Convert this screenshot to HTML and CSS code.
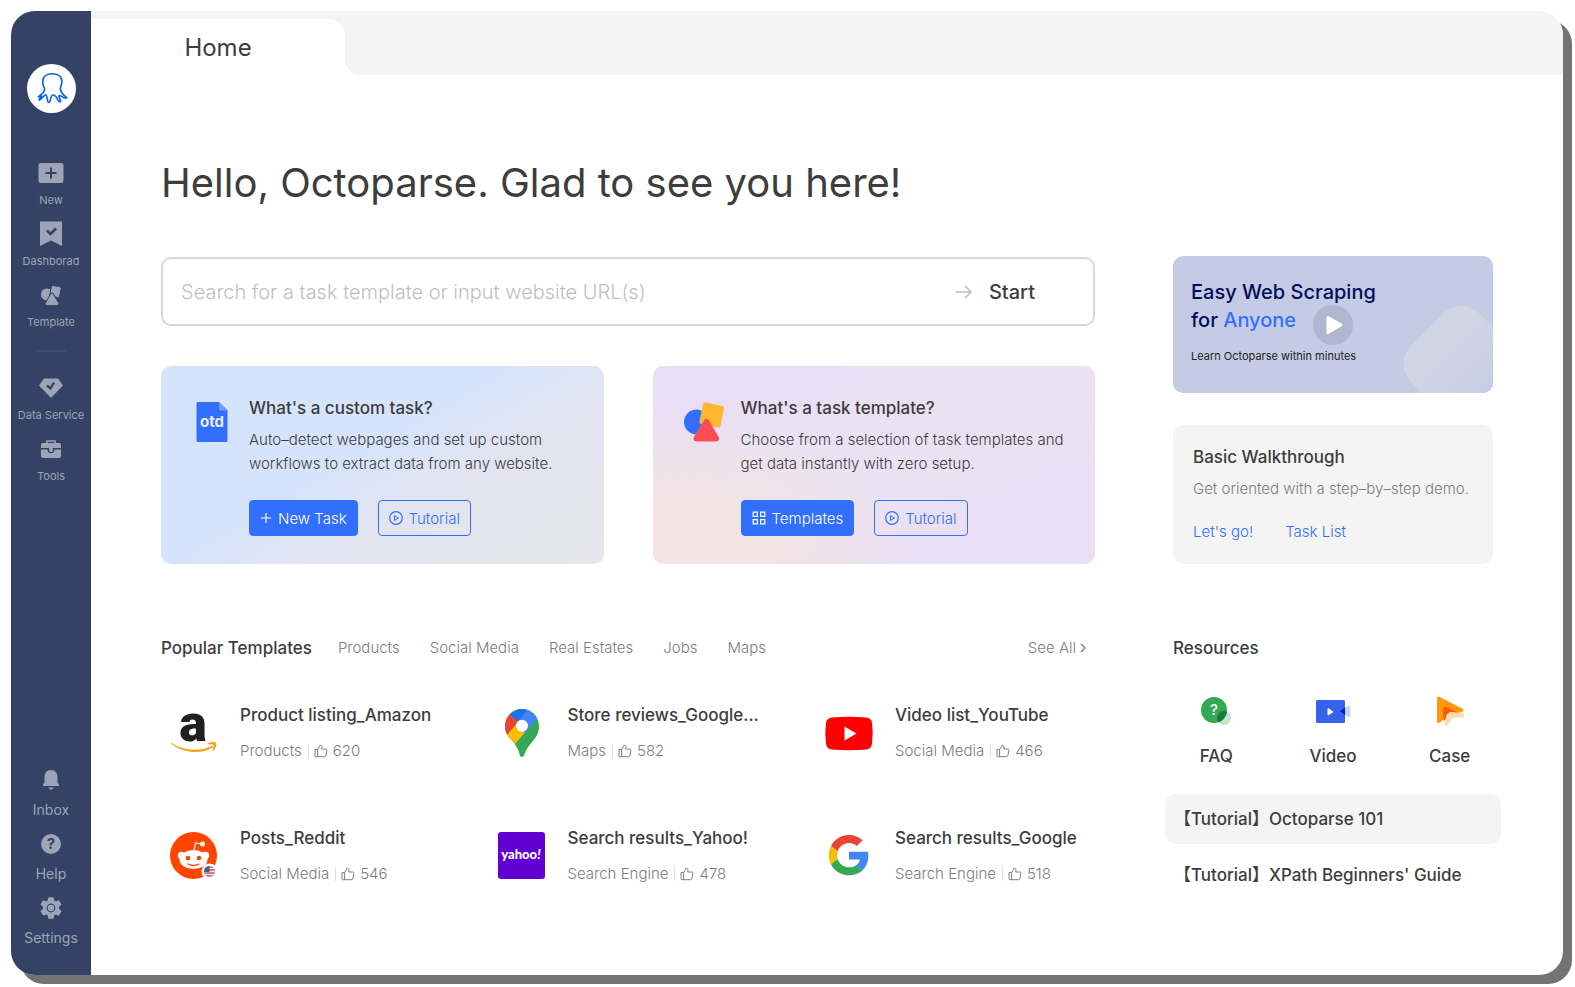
FILE: index.html
```html
<!DOCTYPE html>
<html lang="en">
<head>
<meta charset="utf-8">
<title>Octoparse</title>
<meta name="viewport" content="width=device-width, initial-scale=1">
<link rel="stylesheet" href="styles.css">
</head>
<body>
<svg class="defs" aria-hidden="true">
  <symbol id="thumb" viewBox="0 0 14 14">
    <path d="M1 5.600h2.600L5.400 2.600 5.800 1.400c1.300-.4 2.300.4 2.200 1.600L7.700 5h4.100c.8 0 1.300.6 1.100 1.400l-1 5c-.2.800-.7 1.300-1.500 1.300H1.800c-.5 0-.8-.3-.8-.8zM3.600 5.600v7" fill="none" stroke="currentColor" stroke-linejoin="round"/>
  </symbol>
  <symbol id="play-ring" viewBox="0 0 14 14">
    <circle cx="7" cy="7" r="6.300" fill="none" stroke="currentColor" stroke-width="1.200"/>
    <path d="M5.500 4.600v4.800L9.400 7z" fill="none" stroke="currentColor" stroke-linejoin="round"/>
  </symbol>
</svg>
<div class="window">
  <aside class="sidebar">
    <svg class="logo" viewBox="78 190 150 150" role="img" aria-label="Octoparse">
      <circle cx="153" cy="265" r="75" fill="#fff"/>
      <path d="M132 266C128 258 126 253 126 244C126 229 138 220 155 220C173 220 185 229 185 244C185 253 180 258 180 267C182 279 191 287 200 293C196 297 189 293 184 289C180 286 175 285 176 290L181 303C179 309 175 304 172 299C168 291 163 285 158 285C152 285 151 292 149 302C147 310 143 310 141 302C139 294 139 285 135 284C131 284 123 299 115 301C114 297 121 293 123 289C120 290 116 291 113 290C121 285 132 278 132 266Z" fill="none" stroke="#0a62e8" stroke-width="5" stroke-linejoin="round"/>
    </svg>
    <nav class="nav nav-main">
      <a href="#" class="nav-item"><svg width="26" height="26" viewBox="0 0 26 26"><path fill="currentColor" fill-rule="evenodd" d="M3 3h20q2.500 0 2.500 2.500v15q0 2.500-2.500 2.500H3Q.5 23 .5 20.500v-15Q.5 3 3 3zM12 7.500V12H7.500v2H12v4.500h2V14h4.500v-2H14V7.500z"/></svg><span>New</span></a>
      <a href="#" class="nav-item"><svg width="26" height="26" viewBox="0 0 26 26"><path fill="currentColor" d="M2 .5h22V25l-11-5.500L2 25z"/><path d="M9 9.500l3.500 3.500L18 7.500" fill="none" stroke="#344365" stroke-width="2.600"/></svg><span>Dashborad</span></a>
      <a href="#" class="nav-item"><svg width="26" height="26" viewBox="0 0 26 26"><circle cx="9" cy="12.500" r="6" fill="currentColor"/><rect x="12.500" y="4" width="10" height="11" rx="1.500" transform="rotate(12 17.500 9.500)" fill="currentColor" stroke="#344365"/><path d="M14 12.500l6 10H8.500z" fill="currentColor" stroke="#344365" stroke-width="4" stroke-linejoin="round"/><path d="M14 12.500l5.500 9.500h-11z" fill="currentColor" stroke="currentColor" stroke-width="2" stroke-linejoin="round"/></svg><span>Template</span></a>
      <hr class="nav-rule">
      <a href="#" class="nav-item"><svg width="26" height="26" viewBox="0 0 26 26"><path fill="currentColor" stroke="currentColor" stroke-linejoin="round" d="M6 4h14l4.500 6.500L13 22.500 1.500 10.500z"/><path d="M9 10.500l3.500 3L16 7.500" fill="none" stroke="#344365" stroke-width="2.400"/></svg><span>Data Service</span></a>
      <a href="#" class="nav-item"><svg width="26" height="26" viewBox="0 0 26 26"><path d="M9 7.500V5h8v2.500" fill="none" stroke="currentColor" stroke-width="1.600"/><path fill="currentColor" d="M5 7h16q2 0 2 2v3H3V9q0-2 2-2zM3 13.500h6.500c0 5 7 5 7 0H23V20q0 2-2 2H5q-2 0-2-2z"/><path d="M11.200 12v2.500c0 2 3.600 2 3.600 0V12" fill="currentColor"/></svg><span>Tools</span></a>
    </nav>
    <nav class="nav nav-foot">
      <a href="#" class="nav-item"><svg width="26" height="26" viewBox="0 0 26 26"><path fill="currentColor" d="M13 3c4.500 0 6.500 3.500 6.500 7v5.500l1.500 2V19H5v-1.500l1.500-2V10c0-3.500 2-7 6.500-7zM10.500 20.500h5q-.5 2-2.500 2t-2.500-2z"/></svg><span>Inbox</span></a>
      <a href="#" class="nav-item"><svg width="26" height="26" viewBox="0 0 26 26"><circle cx="13" cy="13" r="10" fill="currentColor"/><text x="13" y="18" class="mark mark-dark">?</text></svg><span>Help</span></a>
      <a href="#" class="nav-item"><svg width="26" height="26" viewBox="0 0 26 26"><path fill="currentColor" stroke="currentColor" stroke-width="1.500" stroke-linejoin="round" d="M11 3h4l.6 3 2 1.100 3-1 2 3.400-2.300 2v2.800l2.300 2-2 3.400-3-1-2 1.100L15 23h-4l-.6-3.200-2-1.100-3 1-2-3.400 2.300-2v-2.800l-2.300-2 2-3.400 3 1 2-1.100z"/><circle cx="13" cy="13" r="3.800" fill="none" stroke="#344365" stroke-width="1.200"/></svg><span>Settings</span></a>
    </nav>
  </aside>

  <div class="main">
    <header class="tabbar"><a href="#" class="tab">Home</a></header>
    <main class="content">
      <h1>Hello, Octoparse. Glad to see you here!</h1>

      <div class="columns top">
        <div class="left">
          <form class="search">
            <input type="text" aria-label="Search" placeholder="Search for a task template or input website URL(s)">
            <button type="button" class="start"><svg width="18" height="14" viewBox="0 0 18 14"><path d="M1 7h15M10.500 1.500L16 7l-5.500 5.500" fill="none" stroke="#bfbfbf" stroke-width="1.500" stroke-linecap="round"/></svg>Start</button>
          </form>
          <div class="cards">
            <section class="card card-task">
              <svg class="card-icon" viewBox="0 0 40 40"><path fill="#326fff" d="M5.500 0H27l8.500 8.500v30q0 1.500-1.500 1.500H6q-1.500 0-1.500-1.500v-37Q4.500 0 5.500 0z"/><path fill="#6f9bff" d="M27 0l8.500 8.500H28q-1 0-1-1z"/><text x="20" y="25" class="otd">otd</text></svg>
              <div>
                <h2>What's a custom task?</h2>
                <p>Auto–detect webpages and set up custom workflows to extract data from any website.</p>
                <div class="actions">
                  <button type="button" class="btn btn-fill"><svg width="12" height="12" viewBox="0 0 12 12"><path d="M6 1v10M1 6h10" stroke="currentColor" stroke-width="1.200"/></svg>New Task</button>
                  <button type="button" class="btn btn-line"><svg width="14" height="14"><use href="#play-ring"/></svg>Tutorial</button>
                </div>
              </div>
            </section>
            <section class="card card-template">
              <svg class="card-icon" viewBox="0 0 40 40"><circle cx="12.500" cy="20" r="12.500" fill="#326fff"/><rect x="17" y="2" width="21.500" height="22" rx="2.500" transform="rotate(12 27.500 13)" fill="#ffb72e"/><path d="M22.500 20L32 36.500H12.500z" fill="#ff4d53" stroke="#ff4d53" stroke-width="6" stroke-linejoin="round"/></svg>
              <div>
                <h2>What's a task template?</h2>
                <p>Choose from a selection of task templates and get data instantly with zero setup.</p>
                <div class="actions">
                  <button type="button" class="btn btn-fill"><svg width="14" height="14" viewBox="0 0 14 14"><path d="M1.200 1.200h4.200v4.200H1.200zM8.600 1.200h4.200v4.200H8.600zM1.200 8.600h4.200v4.200H1.200zM8.600 8.600h4.200v4.200H8.600z" fill="none" stroke="currentColor" stroke-width="1.200"/></svg>Templates</button>
                  <button type="button" class="btn btn-line"><svg width="14" height="14"><use href="#play-ring"/></svg>Tutorial</button>
                </div>
              </div>
            </section>
          </div>
        </div>

        <div class="right">
          <section class="banner">
            <h2>Easy Web Scraping<br>for <span>Anyone</span></h2>
            <p>Learn Octoparse within minutes</p>
            <button type="button" class="play" aria-label="Play"><svg width="40" height="40" viewBox="0 0 40 40"><path d="M15 12.500v15l13-7.500z" fill="#fff" stroke="#fff" stroke-width="3" stroke-linejoin="round"/></svg></button>
          </section>
          <section class="walk">
            <h2>Basic Walkthrough</h2>
            <p>Get oriented with a step–by–step demo.</p>
            <div class="links"><a href="#">Let's go!</a><a href="#">Task List</a></div>
          </section>
        </div>
      </div>

      <div class="columns bottom">
        <section>
          <div class="pop-head">
            <h2>Popular Templates</h2>
            <nav class="filters"><a href="#">Products</a><a href="#">Social Media</a><a href="#">Real Estates</a><a href="#">Jobs</a><a href="#">Maps</a></nav>
            <a href="#" class="see-all">See All<svg width="8" height="12" viewBox="0 0 8 12"><path d="M2 2l4 4-4 4" fill="none" stroke="currentColor" stroke-width="1.400"/></svg></a>
          </div>
          <div class="templates">
            <article class="tpl">
              <svg class="tpl-icon" viewBox="0 0 48 48"><text x="23" y="32" class="amz">a</text><path fill="#f9a11b" d="M1 33.500C13 42 31 43 42 36.500C43 36.500 43.500 37.500 42.500 38.500C30 46 13 44 1 34.500z"/><path fill="#f9a11b" d="M37.500 34.500C40 32.800 44 32.500 46 33.500C47 36 45.500 40 43 42C42 42 43 39.500 43.800 36C43 35 40 35 37.500 35.300z"/></svg>
              <div><h3>Product listing_Amazon</h3><p class="meta"><span>Products</span><span class="likes"><svg width="14" height="14"><use href="#thumb"/></svg>620</span></p></div>
            </article>
            <article class="tpl">
              <svg class="tpl-icon" viewBox="-21 0 144 144"><clipPath id="pin"><path d="M51 0C79 0 102 23 102 52C102 75 92 86 78 103C66 118 60 130 57 140Q51 148 45 140C42 128 38 118 30 106C18 90 0 78 0 52C0 23 23 0 51 0z"/></clipPath><g clip-path="url(#pin)"><path fill="#34a853" d="M0 0h102v144H0z"/><path fill="#fbbc04" d="M0 85l38-45 28 23-36 43H0z"/><path fill="#4285f4" d="M68 0h34v24L60 72 37 38z"/><path fill="#1a73e8" d="M14 17L0 0h68L38 39z"/><path fill="#ea4335" d="M-5 0L14 17l25 21L7 76l-12 10z"/></g><circle cx="51" cy="50" r="18" fill="#fff"/></svg>
              <div><h3>Store reviews_Google...</h3><p class="meta"><span>Maps</span><span class="likes"><svg width="14" height="14"><use href="#thumb"/></svg>582</span></p></div>
            </article>
            <article class="tpl">
              <svg class="tpl-icon" viewBox="0 0 48 48"><path fill="#f00" d="M7 8.500Q24 7 41 8.500Q46.500 9 47 14Q48.500 24 47 34.500Q46.500 40 41 40.500Q24 42 7 40.500Q1.500 40 1 34.500Q-.5 24 1 14Q1.500 9 7 8.500z"/><path fill="#fff" d="M19.500 17.500v14l12-7z"/></svg>
              <div><h3>Video list_YouTube</h3><p class="meta"><span>Social Media</span><span class="likes"><svg width="14" height="14"><use href="#thumb"/></svg>466</span></p></div>
            </article>
            <article class="tpl">
              <svg class="tpl-icon" viewBox="0 0 48 48"><circle cx="23.500" cy="23.500" r="23.500" fill="#ff4500"/><circle cx="11.500" cy="23.500" r="3.700" fill="#fff"/><circle cx="35.500" cy="23.500" r="3.700" fill="#fff"/><ellipse cx="23.500" cy="27.500" rx="14" ry="9.500" fill="#fff"/><path d="M24 18.500l1.500-7.500 6 1" fill="none" stroke="#fff" stroke-width="1.200"/><circle cx="32.500" cy="12" r="2.500" fill="#fff"/><circle cx="18" cy="26" r="2.300" fill="#ff4500"/><circle cx="29" cy="26" r="2.300" fill="#ff4500"/><path d="M18 32q5.500 3 11 0" fill="none" stroke="#ff4500" stroke-width="1.300" stroke-linecap="round"/><circle cx="39.500" cy="39.500" r="8" fill="#fff"/><clipPath id="flag"><circle cx="39.500" cy="39.500" r="5.500"/></clipPath><g clip-path="url(#flag)"><path fill="#f3e6e8" d="M34 34h11v11H34z"/><path d="M34 35h11M34 38h11M34 41h11M34 44h11" stroke="#d0576a" stroke-width="1.400"/><path fill="#4a5b86" d="M34 34h5.500v6H34z"/></g></svg>
              <div><h3>Posts_Reddit</h3><p class="meta"><span>Social Media</span><span class="likes"><svg width="14" height="14"><use href="#thumb"/></svg>546</span></p></div>
            </article>
            <article class="tpl">
              <svg class="tpl-icon" viewBox="0 0 48 48"><rect width="47" height="47" rx="3" fill="#6001d2"/><text x="23" y="27" class="yahoo">yahoo<tspan class="bang">!</tspan></text></svg>
              <div><h3>Search results_Yahoo!</h3><p class="meta"><span>Search Engine</span><span class="likes"><svg width="14" height="14"><use href="#thumb"/></svg>478</span></p></div>
            </article>
            <article class="tpl">
              <svg class="tpl-icon" viewBox="-4.500 -3.500 57 57"><path fill="#ea4335" d="M24 9.500c3.540 0 6.710 1.220 9.210 3.600l6.850-6.850C35.900 2.380 30.470 0 24 0 14.620 0 6.510 5.380 2.560 13.220l7.980 6.190C12.430 13.720 17.740 9.500 24 9.500z"/><path fill="#4285f4" d="M46.980 24.550c0-1.570-.15-3.090-.38-4.550H24v9.020h12.940c-.58 2.960-2.260 5.480-4.780 7.180l7.730 6c4.510-4.180 7.090-10.360 7.090-17.650z"/><path fill="#fbbc05" d="M10.530 28.590c-.48-1.450-.76-2.990-.76-4.590s.27-3.140.76-4.590l-7.980-6.190C.92 16.460 0 20.120 0 24c0 3.880.92 7.540 2.560 10.780l7.970-6.190z"/><path fill="#34a853" d="M24 48c6.480 0 11.930-2.130 15.890-5.810l-7.730-6c-2.150 1.450-4.920 2.300-8.160 2.300-6.260 0-11.570-4.220-13.470-9.910l-7.980 6.190C6.510 42.620 14.620 48 24 48z"/></svg>
              <div><h3>Search results_Google</h3><p class="meta"><span>Search Engine</span><span class="likes"><svg width="14" height="14"><use href="#thumb"/></svg>518</span></p></div>
            </article>
          </div>
        </section>

        <section>
          <h2 class="res-title">Resources</h2>
          <div class="res-icons">
            <a href="#"><svg width="36" height="36" viewBox="0 0 36 36"><circle cx="26" cy="22" r="7" fill="#bfe8ca"/><circle cx="16" cy="14" r="13" fill="#34a853"/><clipPath id="faq"><circle cx="16" cy="14" r="13"/></clipPath><circle cx="26" cy="22" r="7" fill="#187a3d" clip-path="url(#faq)"/><text x="16" y="19" class="mark mark-light">?</text></svg>FAQ</a>
            <a href="#"><svg width="36" height="36" viewBox="0 0 36 36"><rect x="1" y="4" width="29" height="23" rx="1.500" fill="#3662ec"/><path fill="#fff" stroke="#fff" stroke-linejoin="round" d="M13 12.500v6.500l5-3.200z"/><path fill="#c3d3f8" d="M30 11.500l4-2q1.500 0 1.500 1.500v8.500q0 1.500-1.500 1.500l-4-2z"/><path fill="#0b14e0" d="M30 11.500v7.500l-5-3.700z"/></svg>Video</a>
            <a href="#"><svg width="36" height="36" viewBox="0 0 36 36"><path fill="#ff980c" stroke="#ff980c" stroke-width="3" stroke-linejoin="round" d="M6.500 2L30 14l-8 3-8.500 3L6.500 25.500z"/><path fill="#ff5410" d="M11.500 12.500q0-3 3-1.500L26.500 17l-9 4-6 4z"/><path fill="#ffddab" stroke="#ffddab" stroke-width="3" stroke-linejoin="round" d="M14 28.500l1.500-8.500 3-2.500L30.500 18.500v1.500h-8.500l-2.500 1z"/></svg>Case</a>
          </div>
          <ul class="tutorials">
            <li><a href="#" class="active">【Tutorial】Octoparse 101</a></li>
            <li><a href="#">【Tutorial】XPath Beginners' Guide</a></li>
          </ul>
        </section>
      </div>
    </main>
  </div>
</div>
</body>
</html>
```
FILE: styles.css
```css
* { box-sizing: border-box; }
body {
  margin: 0;
  background: #fff;
  color: #3d3d3d;
  font-family: Inter, "Noto Sans CJK SC", sans-serif;
  font-size: 15px;
  font-weight: 300;
}
a { color: inherit; text-decoration: none; }
button, input { font: inherit; }
button { cursor: pointer; }
h1, h2, h3, p, ul { margin: 0; padding: 0; font-weight: inherit; }
h2, h3 { font-size: 17px; line-height: 24px; font-weight: 500; }
ul { list-style: none; }
svg { display: block; flex: none; overflow: visible; }
.defs { position: absolute; width: 0; height: 0; }

.window {
  display: flex;
  min-height: calc(100vh - 23px);
  margin: 11px 12px 12px 11px;
  border-radius: 24px;
  background: #fff;
  box-shadow: 9px 9px 0 #737373;
  overflow: hidden;
}

/* Sidebar */
.sidebar {
  flex: none;
  display: flex;
  flex-direction: column;
  align-items: center;
  width: 80px;
  padding: 53px 0 28px;
  background: #344365;
  color: #9ca4b6;
  font-weight: 400;
}
.logo { width: 49px; height: 49px; }
.nav { display: flex; flex-direction: column; align-items: center; }
.nav-main { margin-top: 47px; gap: 12px; font-size: 11px; }
.nav-foot { margin-top: auto; gap: 12px; font-size: 14px; }
.nav-item { display: flex; flex-direction: column; align-items: center; gap: 5px; line-height: 18px; white-space: nowrap; }
.nav-foot .nav-item { gap: 8px; }
.nav-rule { width: 30px; height: 2px; margin: 7px 0 11px; border: 0; background: #3f4b6a; }
.mark { font-family: Inter, sans-serif; font-size: 15px; font-weight: 700; text-anchor: middle; }
.mark-dark { fill: #344365; }
.mark-light { fill: #fff; font-weight: 500; }

/* Tab bar */
.main { flex: 1; min-width: 0; }
.tabbar { display: flex; height: 64px; padding-top: 8px; background: #f4f4f4; }
.tab {
  position: relative;
  display: flex;
  align-items: center;
  justify-content: center;
  width: 254px;
  background: #fff;
  border-radius: 0 16px 0 0;
  font-size: 24px;
  font-weight: 400;
}
.tab::after {
  content: "";
  position: absolute;
  left: 100%;
  bottom: 0;
  width: 16px;
  height: 16px;
  background: radial-gradient(circle at 100% 0, #f4f4f4 16px, #fff 16px);
}

/* Content */
.content { padding: 80px 70px 0; }
h1 { font-size: 40px; line-height: 56px; font-weight: 400; }
.columns { display: grid; grid-template-columns: minmax(0, 1fr) 320px; column-gap: 78px; }
.top { margin-top: 45px; }
.bottom { margin-top: 72px; }

.search {
  display: flex;
  align-items: center;
  height: 69px;
  margin-top: 1px;
  border: 2px solid #d9d9d9;
  border-radius: 10px;
}
.search input {
  flex: 1;
  min-width: 0;
  height: 100%;
  padding: 0 18px;
  border: 0;
  outline: 0;
  background: none;
  font-size: 20px;
  font-weight: 300;
  color: #3d3d3d;
}
.search input::placeholder { color: #bfbfbf; }
.start {
  display: flex;
  align-items: center;
  gap: 16px;
  padding: 0 58px 0 0;
  border: 0;
  background: none;
  color: #3d3d3d;
  font-size: 20px;
  font-weight: 500;
}

.cards { display: grid; grid-template-columns: 1fr 1fr; gap: 49px; margin-top: 40px; }
.card { display: flex; gap: 17px; padding: 30px 20px 28px 31px; border-radius: 10px; }
.card-task { background: linear-gradient(150deg, #d6e4fb 45%, #e4e4f0 65%, #e6e6ec 100%); }
.card-template {
  background:
    radial-gradient(ellipse 60% 80% at 0 100%, #f2e4e0 30%, #f2e4e000 100%),
    linear-gradient(155deg, #eadef6 20%, #eae2f3 38%, #eae2f3 60%, #eadef6 78%);
}
.card-icon { width: 40px; height: 40px; margin-top: 6px; }
.card p { margin-top: 8px; line-height: 24px; }
.otd { font-family: Inter, sans-serif; font-size: 15px; font-weight: 700; fill: #e6eeff; text-anchor: middle; }
.actions { display: flex; gap: 20px; margin-top: 24px; }
.btn {
  display: flex;
  align-items: center;
  gap: 6px;
  height: 36px;
  padding: 0 10px;
  border: 1px solid #326fff;
  border-radius: 4px;
  background: none;
  color: #326fff;
}
.btn-fill { background: #326fff; color: #fff; }

.right { display: flex; flex-direction: column; gap: 32px; }
.banner, .walk { flex: 1; border-radius: 10px; }
.banner { position: relative; overflow: hidden; padding: 22px 18px; background: #c5cbe5; color: #000e5c; }
.banner::after {
  content: "";
  position: absolute;
  right: -25px;
  bottom: -39px;
  width: 97px;
  height: 120px;
  border-radius: 26px;
  transform: rotate(-45deg);
  background: linear-gradient(180deg, #d1d5e4 20%, #c5cbe5 85%);
}
.banner h2 { font-size: 20px; line-height: 28px; }
.banner h2 span { color: #326fff; }
.banner p { margin-top: 12px; color: #222; font-size: 11px; line-height: 20px; font-weight: 400; }
.play {
  position: absolute;
  top: 49px;
  left: 140px;
  width: 40px;
  height: 40px;
  padding: 0;
  border: 0;
  border-radius: 50%;
  background: #b0b6cf;
}
.walk { padding: 20px 16px 20px 20px; background: #f4f4f4; }
.walk p { margin-top: 8px; color: #7d7d7d; line-height: 24px; }
.links { display: flex; gap: 32px; margin-top: 19px; color: #326fff; line-height: 24px; }

/* Popular templates */
.pop-head { display: flex; align-items: center; line-height: 24px; color: #7d7d7d; }
.pop-head h2 { color: #3d3d3d; }
.filters { display: flex; gap: 30px; margin-left: 26px; }
.see-all { display: flex; align-items: center; gap: 3px; margin-left: auto; margin-right: 8px; }
.templates { display: grid; grid-template-columns: 1fr 1fr 270px; row-gap: 51px; margin: 43px 0 0 9px; }
.tpl { display: flex; gap: 22px; height: 72px; }
.tpl-icon { width: 48px; height: 48px; margin-top: 6px; }
.tpl h3 { white-space: nowrap; }
.meta { display: flex; gap: 6px; margin-top: 13px; color: #7d7d7d; line-height: 22px; white-space: nowrap; }
.likes { display: flex; align-items: center; gap: 5px; line-height: 14px; }
.likes::before { content: ""; width: 1px; height: 14px; background: #e2dce4; }
.amz { font-family: Roboto, sans-serif; font-size: 52px; font-weight: 900; fill: #221f1f; text-anchor: middle; }
.yahoo { font-family: Lato, sans-serif; font-size: 13px; font-weight: 900; fill: #fff; text-anchor: middle; }
.bang { font-style: italic; }

/* Resources */
.res-icons { display: grid; grid-template-columns: repeat(3, 1fr); margin: 36px -15px 0; }
.res-icons a { display: flex; flex-direction: column; align-items: center; gap: 12px; font-size: 17px; line-height: 24px; font-weight: 500; }
.tutorials { margin: 26px -8px 0; }
.tutorials li { margin-bottom: 6px; }
.tutorials a { display: block; padding: 13px 9px; border-radius: 10px; font-size: 17px; line-height: 24px; font-weight: 500; white-space: nowrap; }
.tutorials .active { background: #f4f4f4; }
```
